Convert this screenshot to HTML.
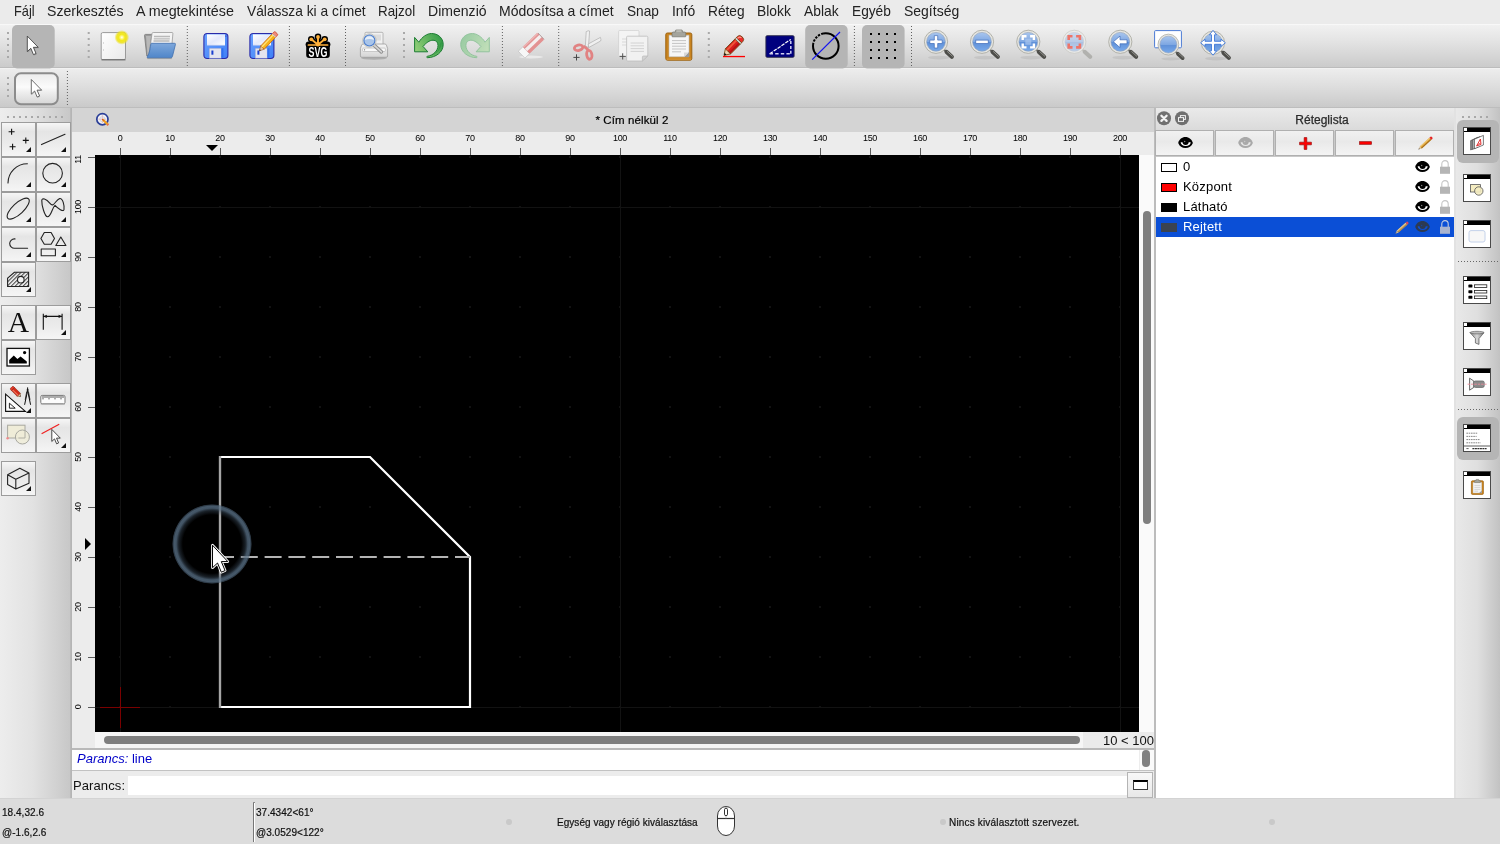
<!DOCTYPE html>
<html>
<head>
<meta charset="utf-8">
<title>LibreCAD</title>
<style>
*{box-sizing:border-box;margin:0;padding:0}
body{will-change:transform}
html,body{width:1500px;height:844px;overflow:hidden;background:#dcdcdc;font-family:"Liberation Sans",sans-serif;color:#1a1a1a}
.abs{position:absolute}
#menubar{position:absolute;left:0;top:0;width:1500px;height:24px;background:#ebebeb}
#menubar span{position:absolute;top:1.8px;font-size:15px;line-height:17px;color:#222;white-space:nowrap;transform-origin:0 50%}
#tb1{z-index:2;position:absolute;left:0;top:24px;width:1500px;height:44px;background:linear-gradient(#f1f1f1 0%,#e3e3e3 40%,#cbcbcb 100%);border-top:1px solid #f8f8f8;border-bottom:1px solid #bcbcbc}
#tb2{position:absolute;left:0;top:68px;width:1500px;height:39px;background:linear-gradient(#ededed 0%,#dedede 45%,#cacaca 100%);border-top:1px solid #f2f2f2}
#tbline{position:absolute;left:0;top:107px;width:1500px;height:1px;background:#bdbdbd}
.hdl{position:absolute;width:2px;background-image:linear-gradient(#a8a8a8 2px,transparent 2px);background-size:2px 6px}
.hdlh{position:absolute;height:2px;background-image:linear-gradient(90deg,#a8a8a8 2px,transparent 2px);background-size:6px 2px}
.sep{position:absolute;width:1px;background-image:linear-gradient(#555 1px,transparent 1px);background-size:1px 3px}
.seph{position:absolute;height:1px;background-image:linear-gradient(90deg,#666 1px,transparent 1px);background-size:3px 1px}
.selbtn{position:absolute;background:#b5b5b5;border-radius:5px}
.ico{position:absolute;overflow:visible}
#left{position:absolute;left:0;top:108px;width:72px;height:690px;background:linear-gradient(90deg,#ededed 0%,#e2e2e2 45%,#c6c6c6 100%)}
.tbtn{position:absolute;width:35px;height:35px;border:1px solid #9c9c9c;background:linear-gradient(#f6f6f6 0%,#e5e5e5 26%,#ebebeb 60%,#f5f5f5 100%)}
.tbtn.m::after{content:"";position:absolute;right:4px;bottom:4px;border-style:solid;border-width:0 0 5px 5px;border-color:transparent transparent #111 transparent}
.tbtn svg{position:absolute;left:0;top:0;width:33px;height:33px}
#mdi{position:absolute;left:72px;top:108px;width:1082px;height:640px;background:#ececec}
#mdititle{position:absolute;left:0;top:0;width:1082px;height:24px;background:#d4d4d4}
#canvas{position:absolute;left:95px;top:155px;width:1044px;height:577px;background:#000;overflow:hidden}
.rl{position:absolute;font-size:11px;line-height:11px;color:#000;white-space:nowrap;letter-spacing:-.3px}
#cmd{position:absolute;left:72px;top:748px;width:1082px;height:50px;background:#ececec}
#layers{position:absolute;left:1154px;top:108px;width:301px;height:690px;background:#fff}
.lbtn{position:absolute;top:22.2px;width:59px;height:25.8px;border:1px solid #b0b0b0;background:linear-gradient(#f1f1f1,#e9e9e9 45%,#f4f4f4)}
.lrow{position:absolute;left:2px;width:298px;height:20px;font-size:13px;line-height:20px;color:#000}
.lrow .sw{position:absolute;left:5px;top:6px;width:16px;height:9px;border:1px solid #000}
.lrow .nm{position:absolute;left:27px;top:0;letter-spacing:.2px}
#right{position:absolute;left:1455px;top:108px;width:45px;height:690px;background:linear-gradient(90deg,#e9e9e9 0%,#dfdfdf 50%,#c2c2c2 100%)}
.wico{position:absolute;left:8px;width:28px;height:28px;background:#fff;border:1px solid #4a4a4a}
.wico::before{content:"";position:absolute;left:0;top:0;width:26px;height:4px;background:#000}
.wico::after{content:"";position:absolute;left:0;top:0;width:3px;height:3px;background:#fff}
#status{position:absolute;left:0;top:798px;width:1500px;height:46px;background:#dcdcdc}
.st{position:absolute;font-size:10px;line-height:12px;color:#111;-webkit-text-stroke:.2px #111;white-space:nowrap;letter-spacing:.04px}
.dot{position:absolute;width:6px;height:6px;border-radius:3px;background:#c9c9c9}
</style>
</head>
<body>
<div id="menubar">
<span style="left:13.7px;transform:scaleX(0.852)">Fájl</span>
<span style="left:46.7px;transform:scaleX(0.938)">Szerkesztés</span>
<span style="left:136.1px;transform:scaleX(0.955)">A megtekintése</span>
<span style="left:246.7px;transform:scaleX(0.918)">Válassza ki a címet</span>
<span style="left:378.1px;transform:scaleX(0.892)">Rajzol</span>
<span style="left:428.1px;transform:scaleX(0.937)">Dimenzió</span>
<span style="left:499.4px;transform:scaleX(0.935)">Módosítsa a címet</span>
<span style="left:627.1px;transform:scaleX(0.910)">Snap</span>
<span style="left:672.1px;transform:scaleX(0.927)">Infó</span>
<span style="left:707.7px;transform:scaleX(0.914)">Réteg</span>
<span style="left:757.1px;transform:scaleX(0.924)">Blokk</span>
<span style="left:804.4px;transform:scaleX(0.922)">Ablak</span>
<span style="left:852.1px;transform:scaleX(0.914)">Egyéb</span>
<span style="left:904.1px;transform:scaleX(0.932)">Segítség</span>
</div>
<div id="tb1"><!--TB1-->
<svg class="abs" style="left:0;top:-1px" width="1500" height="84" viewBox="0 24 1500 84">
<defs>
<linearGradient id="gPaper" x1="0" y1="0" x2="1" y2="1"><stop offset="0" stop-color="#ffffff"/><stop offset="1" stop-color="#e9e9e9"/></linearGradient>
<radialGradient id="gGlow"><stop offset="0" stop-color="#ffffff"/><stop offset=".18" stop-color="#fff88a"/><stop offset=".42" stop-color="#f3e91c"/><stop offset=".7" stop-color="#efe31c" stop-opacity=".9"/><stop offset="1" stop-color="#e8dc20" stop-opacity="0"/></radialGradient>
<linearGradient id="gFold" x1="0" y1="0" x2="0" y2="1"><stop offset="0" stop-color="#7fa8dc"/><stop offset="1" stop-color="#4f86c9"/></linearGradient>
<linearGradient id="gDisk" x1="0" y1="0" x2="1" y2="1"><stop offset="0" stop-color="#6aa2ff"/><stop offset="1" stop-color="#3f7ff6"/></linearGradient>
<linearGradient id="gLabel" x1="0" y1="0" x2="1" y2="1"><stop offset="0" stop-color="#ffffff"/><stop offset=".5" stop-color="#e4e9fb"/><stop offset="1" stop-color="#ffffff"/></linearGradient>
<linearGradient id="gUndo" gradientUnits="userSpaceOnUse" x1="414" y1="52" x2="443" y2="36"><stop offset="0" stop-color="#9ad27c"/><stop offset="1" stop-color="#2f9a46"/></linearGradient>
<linearGradient id="gRedo" gradientUnits="userSpaceOnUse" x1="414" y1="52" x2="443" y2="36"><stop offset="0" stop-color="#c3e2b8"/><stop offset="1" stop-color="#8fc79a"/></linearGradient>
<linearGradient id="gLens" x1="0" y1="0" x2="0" y2="1"><stop offset="0" stop-color="#a9c6ee"/><stop offset=".5" stop-color="#7ea7e2"/><stop offset=".52" stop-color="#5f90d8"/><stop offset="1" stop-color="#79aaea"/></linearGradient>
<linearGradient id="gLensF" x1="0" y1="0" x2="0" y2="1"><stop offset="0" stop-color="#c5d6ee"/><stop offset=".5" stop-color="#afc6e8"/><stop offset=".52" stop-color="#9db8e2"/><stop offset="1" stop-color="#b3cdf0"/></linearGradient>
<linearGradient id="gBtn" x1="0" y1="0" x2="0" y2="1"><stop offset="0" stop-color="#ebebeb"/><stop offset=".45" stop-color="#fbfbfb"/><stop offset=".6" stop-color="#efefef"/><stop offset="1" stop-color="#d6d6d6"/></linearGradient>
<linearGradient id="gPrn" x1="0" y1="0" x2="0" y2="1"><stop offset="0" stop-color="#f6f6f6"/><stop offset="1" stop-color="#d4d4d4"/></linearGradient>
<g id="lens"><ellipse cx="3" cy="15.8" rx="11" ry="1.8" fill="#000" opacity=".07"/><path d="M7.8 7.8L11 10.6" stroke="#6a6a66" stroke-width="2"/><path d="M10.6 10.2L15.8 15" stroke="#4e4e4a" stroke-width="4.2" stroke-linecap="round"/><path d="M11.4 9.8L16.4 14.4" stroke="#9a9a94" stroke-width=".9" stroke-linecap="round"/><circle r="11.6" fill="#e6e6e1" stroke="#a4a49c" stroke-width=".8"/><circle r="9.4" fill="url(#gLens)" stroke="#8f9fb8" stroke-width=".6"/></g>
<g id="lensF" opacity=".8"><path d="M7.8 7.8L11 10.6" stroke="#b4b4b0" stroke-width="2"/><path d="M10.6 10.2L15.8 15" stroke="#a8a8a4" stroke-width="4.2" stroke-linecap="round"/><circle r="11.6" fill="#ececea" stroke="#c4c4be" stroke-width=".8"/><circle r="9.4" fill="url(#gLensF)" stroke="#b8c2d2" stroke-width=".6"/></g>
</defs>
<rect x="7" y="32" width="2" height="2" fill="#a9a9a9"/>
<rect x="7" y="38" width="2" height="2" fill="#a9a9a9"/>
<rect x="7" y="44" width="2" height="2" fill="#a9a9a9"/>
<rect x="7" y="50" width="2" height="2" fill="#a9a9a9"/>
<rect x="7" y="56" width="2" height="2" fill="#a9a9a9"/>
<rect x="12" y="25" width="42.7" height="43.5" rx="5" fill="#b5b5b5"/>
<g transform="translate(27.3 36.1) scale(0.95)"><path d="M0 0V16.3L3.7 12.8L6.5 19.5L9.2 18.3L6.4 11.8H11.5Z" transform="translate(.8 1)" fill="#000" opacity=".15"/><path d="M0 0V16.3L3.7 12.8L6.5 19.5L9.2 18.3L6.4 11.8H11.5Z" fill="#fff" stroke="#333" stroke-width="0.85" stroke-linejoin="miter"/></g>
<rect x="87.7" y="32" width="2" height="2" fill="#a9a9a9"/>
<rect x="87.7" y="38" width="2" height="2" fill="#a9a9a9"/>
<rect x="87.7" y="44" width="2" height="2" fill="#a9a9a9"/>
<rect x="87.7" y="50" width="2" height="2" fill="#a9a9a9"/>
<rect x="87.7" y="56" width="2" height="2" fill="#a9a9a9"/>
<rect x="101.2" y="32.6" width="24.3" height="27" rx="1.5" fill="url(#gPaper)" stroke="#9a9a9a" stroke-width="1"/><path d="M101.5 59.8H125.5" stroke="#6e6e6e" stroke-width="1.2"/><path d="M103 43h1M103 50h1" stroke="#bbb" stroke-width="1"/><circle cx="121.8" cy="37.4" r="7.4" fill="url(#gGlow)"/>
<path d="M144.5 35.4Q144.5 34.4 145.5 34.4H152L154 37H166V56H146.8Z" fill="#9a9a9a" stroke="#777" stroke-width=".8"/><path d="M146 36H151L148.6 55H147.6Z" fill="#c4c4c4" opacity=".7"/><path d="M149 55L152 33.5Q152.2 32.5 153.2 32.5H172Q173 32.5 172.9 33.6L171 55Z" fill="#f4f4f4" stroke="#9a9a9a" stroke-width=".8"/><path d="M154 36.5H170M153.8 38.8H169.8M153.5 41H169.5" stroke="#b9b9b9" stroke-width="1.3"/><path d="M151.6 43.3H174.4Q175.8 43.3 175.4 44.6L172.4 56.6Q172.1 57.8 170.8 57.8H148Q146.6 57.8 147.4 56.6C149.6 53 150.4 47 150.8 44.2Q151 43.3 151.6 43.3Z" fill="url(#gFold)" stroke="#3f6fae" stroke-width=".8"/><path d="M147 58.6H172" stroke="#000" stroke-opacity=".18" stroke-width="1"/>
<rect x="186.8" y="26" width="1" height="1" fill="#606060"/>
<rect x="186.8" y="29" width="1" height="1" fill="#606060"/>
<rect x="186.8" y="32" width="1" height="1" fill="#606060"/>
<rect x="186.8" y="35" width="1" height="1" fill="#606060"/>
<rect x="186.8" y="38" width="1" height="1" fill="#606060"/>
<rect x="186.8" y="41" width="1" height="1" fill="#606060"/>
<rect x="186.8" y="44" width="1" height="1" fill="#606060"/>
<rect x="186.8" y="47" width="1" height="1" fill="#606060"/>
<rect x="186.8" y="50" width="1" height="1" fill="#606060"/>
<rect x="186.8" y="53" width="1" height="1" fill="#606060"/>
<rect x="186.8" y="56" width="1" height="1" fill="#606060"/>
<rect x="186.8" y="59" width="1" height="1" fill="#606060"/>
<rect x="186.8" y="62" width="1" height="1" fill="#606060"/>
<rect x="186.8" y="65" width="1" height="1" fill="#606060"/>
<g transform="translate(203.4 33)"><rect x=".5" y=".5" width="24" height="25" rx="3.2" fill="url(#gDisk)" stroke="#2a2aa8" stroke-width="1.1"/><rect x="3.6" y="1.4" width="18" height="11" fill="url(#gLabel)"/><path d="M3.6 12.4H21.6" stroke="#9db8f0" stroke-width=".8"/><rect x="5.8" y="15.2" width="12" height="10" fill="#e4e4ee" stroke="#8c9bd0" stroke-width=".5"/><rect x="8" y="17.5" width="2" height="4.2" fill="#1a3fd0"/><rect x="18" y="15.2" width="2" height="9.5" fill="#2f6ff0"/><rect x="22" y="2.6" width="1" height="1" fill="#2a2aa8"/></g>
<g transform="translate(249.4 33)"><rect x=".5" y=".5" width="24" height="25" rx="3.2" fill="url(#gDisk)" stroke="#2a2aa8" stroke-width="1.1"/><rect x="3.6" y="1.4" width="18" height="11" fill="url(#gLabel)"/><path d="M3.6 12.4H21.6" stroke="#9db8f0" stroke-width=".8"/><rect x="5.8" y="15.2" width="12" height="10" fill="#e4e4ee" stroke="#8c9bd0" stroke-width=".5"/><rect x="8" y="17.5" width="2" height="4.2" fill="#1a3fd0"/><rect x="18" y="15.2" width="2" height="9.5" fill="#2f6ff0"/><rect x="22" y="2.6" width="1" height="1" fill="#2a2aa8"/></g>
<g transform="translate(259.3 50.9) rotate(-46.5)"><path d="M0 0L4.6 -2.4V2.4Z" fill="#e8c9a0" stroke="#8a3c10" stroke-width=".5"/><path d="M0 0L1.6 -.85V.85Z" fill="#222"/><path d="M4.6 -2.4H21.6V2.4H4.6Z" fill="#f6b21a" stroke="#c4620c" stroke-width=".7"/><path d="M4.6 -0.9H21.6" stroke="#ffe27a" stroke-width="1.3"/><path d="M21.6 -2.4H23.6Q24.8 -2.4 24.8 -1.2V1.2Q24.8 2.4 23.6 2.4H21.6Z" fill="#f08a7a" stroke="#c43a20" stroke-width=".7"/><path d="M21.2 -2.4V2.4" stroke="#d8d8d8" stroke-width="1"/></g>
<rect x="288.9" y="26" width="1" height="1" fill="#606060"/>
<rect x="288.9" y="29" width="1" height="1" fill="#606060"/>
<rect x="288.9" y="32" width="1" height="1" fill="#606060"/>
<rect x="288.9" y="35" width="1" height="1" fill="#606060"/>
<rect x="288.9" y="38" width="1" height="1" fill="#606060"/>
<rect x="288.9" y="41" width="1" height="1" fill="#606060"/>
<rect x="288.9" y="44" width="1" height="1" fill="#606060"/>
<rect x="288.9" y="47" width="1" height="1" fill="#606060"/>
<rect x="288.9" y="50" width="1" height="1" fill="#606060"/>
<rect x="288.9" y="53" width="1" height="1" fill="#606060"/>
<rect x="288.9" y="56" width="1" height="1" fill="#606060"/>
<rect x="288.9" y="59" width="1" height="1" fill="#606060"/>
<rect x="288.9" y="62" width="1" height="1" fill="#606060"/>
<rect x="288.9" y="65" width="1" height="1" fill="#606060"/>
<g transform="translate(318 34)"><rect x="-11.8" y="9.4" width="23.6" height="14.5" rx="3" fill="#000"/><g stroke="#000" stroke-width="4.8" stroke-linecap="round"><path d="M0 10.8V2.9M0 10.8L-6.7 5.3M0 10.8L6.7 5.3M-9.4 11H9.4"/></g><g fill="#000"><circle cx="0" cy="2.9" r="3.3"/><circle cx="-6.7" cy="5.3" r="3.3"/><circle cx="6.7" cy="5.3" r="3.3"/><circle cx="-9.4" cy="10.6" r="3"/><circle cx="9.4" cy="10.6" r="3"/></g><g stroke="#ffb13b" stroke-width="1.9" stroke-linecap="round"><path d="M0 10.8V2.9M0 10.8L-6.7 5.3M0 10.8L6.7 5.3"/><path d="M-9.6 11H9.6" stroke-width="1.7"/></g><g fill="#ffb13b"><circle cx="0" cy="2.9" r="1.9"/><circle cx="-6.7" cy="5.3" r="1.9"/><circle cx="6.7" cy="5.3" r="1.9"/><circle cx="0" cy="10.2" r="2.2"/></g><text x="0" y="22.7" text-anchor="middle" font-family="Liberation Sans,sans-serif" font-weight="bold" font-size="13.8" fill="#fff" textLength="18.8" lengthAdjust="spacingAndGlyphs">SVG</text></g>
<rect x="345" y="26" width="1" height="1" fill="#606060"/>
<rect x="345" y="29" width="1" height="1" fill="#606060"/>
<rect x="345" y="32" width="1" height="1" fill="#606060"/>
<rect x="345" y="35" width="1" height="1" fill="#606060"/>
<rect x="345" y="38" width="1" height="1" fill="#606060"/>
<rect x="345" y="41" width="1" height="1" fill="#606060"/>
<rect x="345" y="44" width="1" height="1" fill="#606060"/>
<rect x="345" y="47" width="1" height="1" fill="#606060"/>
<rect x="345" y="50" width="1" height="1" fill="#606060"/>
<rect x="345" y="53" width="1" height="1" fill="#606060"/>
<rect x="345" y="56" width="1" height="1" fill="#606060"/>
<rect x="345" y="59" width="1" height="1" fill="#606060"/>
<rect x="345" y="62" width="1" height="1" fill="#606060"/>
<rect x="345" y="65" width="1" height="1" fill="#606060"/>
<g transform="translate(360 31.5)"><ellipse cx="14" cy="26.6" rx="13" ry="1.6" fill="#000" opacity=".18"/><rect x="5" y=".8" width="18" height="14" rx="1" fill="#f1f1f1" stroke="#a8a8a8" stroke-width=".8"/><rect x="14" y="3" width="7" height="6" fill="#dcdcdc"/><path d="M3.2 12.5H24.8Q26 12.5 26.4 13.6L27.6 17V24.4Q27.6 25.8 26.2 25.8H1.8Q.4 25.8 .4 24.4V17L1.6 13.6Q2 12.5 3.2 12.5Z" fill="url(#gPrn)" stroke="#9c9c9c" stroke-width=".8"/><rect x="2.6" y="16.6" width="22.8" height="3.4" rx="1" fill="#fafafa" stroke="#b0b0b0" stroke-width=".6"/><circle cx="4.6" cy="18.3" r=".6" fill="#666"/><path d="M14.6 14.2L21.4 20.4" stroke="#8e8e8e" stroke-width="3.6" stroke-linecap="round"/><path d="M14.6 14.2L21.4 20.4" stroke="#d6d6d6" stroke-width="1.6" stroke-linecap="round"/><circle cx="9.4" cy="9" r="6.8" fill="#e9e9e6" stroke="#b4b4ae" stroke-width=".7"/><circle cx="9.4" cy="9" r="5.5" fill="#a9c5ea" stroke="#4a7ccc" stroke-width="1.1"/><path d="M4.8 8.4A4.7 4.7 0 0 1 14 8.4A7 3.4 0 0 0 4.8 8.4Z" fill="#fff" opacity=".7"/></g>
<rect x="403" y="32" width="2" height="2" fill="#a9a9a9"/>
<rect x="403" y="38" width="2" height="2" fill="#a9a9a9"/>
<rect x="403" y="44" width="2" height="2" fill="#a9a9a9"/>
<rect x="403" y="50" width="2" height="2" fill="#a9a9a9"/>
<rect x="403" y="56" width="2" height="2" fill="#a9a9a9"/>
<path d="M414.6 37.4L418.8 42.2C422 37 427 33.5 431.5 33.5C438 33.5 443.2 38 443.2 44.5C443.2 52 436 57.5 427.5 57.7C426.4 57.5 426.5 56.5 427.4 56.3C433 55.4 438 51 438 45.5C438 42 436 40.2 433 40.2C429.5 40.2 426 43 423 46.4L427.8 51.8H414.6Z" fill="url(#gUndo)" stroke="#1c7d33" stroke-width="1" stroke-linejoin="round"/>
<path d="M441.6 41C442.6 48 437 55 429 56.6C435 54.6 439.6 50 439.6 44.6Z" fill="#1f8a36" opacity=".45"/>
<g transform="translate(903.9 0) scale(-1 1)" opacity=".9"><path d="M414.6 37.4L418.8 42.2C422 37 427 33.5 431.5 33.5C438 33.5 443.2 38 443.2 44.5C443.2 52 436 57.5 427.5 57.7C426.4 57.5 426.5 56.5 427.4 56.3C433 55.4 438 51 438 45.5C438 42 436 40.2 433 40.2C429.5 40.2 426 43 423 46.4L427.8 51.8H414.6Z" fill="url(#gRedo)" stroke="#84bd92" stroke-width=".9" stroke-linejoin="round"/></g>
<rect x="501.9" y="26" width="1" height="1" fill="#606060"/>
<rect x="501.9" y="29" width="1" height="1" fill="#606060"/>
<rect x="501.9" y="32" width="1" height="1" fill="#606060"/>
<rect x="501.9" y="35" width="1" height="1" fill="#606060"/>
<rect x="501.9" y="38" width="1" height="1" fill="#606060"/>
<rect x="501.9" y="41" width="1" height="1" fill="#606060"/>
<rect x="501.9" y="44" width="1" height="1" fill="#606060"/>
<rect x="501.9" y="47" width="1" height="1" fill="#606060"/>
<rect x="501.9" y="50" width="1" height="1" fill="#606060"/>
<rect x="501.9" y="53" width="1" height="1" fill="#606060"/>
<rect x="501.9" y="56" width="1" height="1" fill="#606060"/>
<rect x="501.9" y="59" width="1" height="1" fill="#606060"/>
<rect x="501.9" y="62" width="1" height="1" fill="#606060"/>
<rect x="501.9" y="65" width="1" height="1" fill="#606060"/>
<g opacity=".9"><ellipse cx="531" cy="57" rx="12" ry="1.4" fill="#fff" opacity=".55"/><g transform="translate(521.6 54.7) rotate(-44)"><rect x="0" y="-4.8" width="6.4" height="9.6" fill="#fbfbfb" stroke="#b8b8b8" stroke-width=".6"/><rect x="6.4" y="-4.8" width="20.4" height="9.6" rx="1" fill="#e48a8a"/><rect x="6.4" y="-2" width="20.4" height="3.4" fill="#f6f0f0"/><path d="M6.4 -4.8H26.2Q26.8 -4.8 26.8 -4.2V-3.4H6.4Z" fill="#eeb0b0"/><path d="M26.8 -4.2V4.6" stroke="#9c8a8a" stroke-width=".8"/></g></g>
<rect x="558.2" y="26" width="1" height="1" fill="#606060"/>
<rect x="558.2" y="29" width="1" height="1" fill="#606060"/>
<rect x="558.2" y="32" width="1" height="1" fill="#606060"/>
<rect x="558.2" y="35" width="1" height="1" fill="#606060"/>
<rect x="558.2" y="38" width="1" height="1" fill="#606060"/>
<rect x="558.2" y="41" width="1" height="1" fill="#606060"/>
<rect x="558.2" y="44" width="1" height="1" fill="#606060"/>
<rect x="558.2" y="47" width="1" height="1" fill="#606060"/>
<rect x="558.2" y="50" width="1" height="1" fill="#606060"/>
<rect x="558.2" y="53" width="1" height="1" fill="#606060"/>
<rect x="558.2" y="56" width="1" height="1" fill="#606060"/>
<rect x="558.2" y="59" width="1" height="1" fill="#606060"/>
<rect x="558.2" y="62" width="1" height="1" fill="#606060"/>
<rect x="558.2" y="65" width="1" height="1" fill="#606060"/>
<g opacity=".92"><path d="M586.2 31.6Q588.6 30.2 589.6 31L588.4 47.6L585.4 45.8Z" fill="#f2f2f2" stroke="#a9a9a9" stroke-width=".7"/><path d="M600.4 37.4Q601.4 39.6 600.6 41L588.6 47.6L588.2 44Z" fill="#f2f2f2" stroke="#a9a9a9" stroke-width=".7"/><ellipse cx="578.6" cy="47.7" rx="4.3" ry="2.7" transform="rotate(-12 578.6 47.7)" fill="none" stroke="#e27c7c" stroke-width="2.8"/><ellipse cx="589.3" cy="54.8" rx="2.6" ry="4.5" transform="rotate(-10 589.3 54.8)" fill="none" stroke="#e27c7c" stroke-width="2.8"/><path d="M583.4 46L588 49.6" stroke="#e27c7c" stroke-width="2.8"/><path d="M573.4 57.4H579.6M576.5 54.3V60.5" stroke="#3c3c3c" stroke-width="1"/></g>
<g opacity=".95"><rect x="618.6" y="30.4" width="20.4" height="26" rx="1.2" fill="#f5f5f5" stroke="#cfcfcf" stroke-width=".8"/><path d="M622 39H628M622 42H628M622 45H628" stroke="#d9d9d9" stroke-width="1"/><path d="M627.6 36.2H646.8Q647.8 36.2 647.8 37.2V56L642.4 61H627.6Q626.6 61 626.6 60V37.2Q626.6 36.2 627.6 36.2Z" fill="#f3f3f3" stroke="#bdbdbd" stroke-width=".8"/><path d="M647.8 56L642.4 61V57Q642.4 56 643.4 56Z" fill="#d4d4d4" stroke="#b4b4b4" stroke-width=".6"/><path d="M630.6 43H644M630.6 45.8H644M630.6 48.6H644M630.6 51.4H644" stroke="#d2d2d2" stroke-width="1"/><path d="M619.6 56.4H625.8M622.7 53.3V59.5" stroke="#4a4a4a" stroke-width="1"/></g>
<g><rect x="665.8" y="33" width="26" height="27.2" rx="1.6" fill="#c9841f" stroke="#9c6110" stroke-width="1"/><path d="M666.6 59.2H691" stroke="#e2a24a" stroke-width=".8"/><path d="M669 35.2H689V56.8L685 56.8L669 56.8Z" fill="#f6f6f6" stroke="#b9b9b9" stroke-width=".6"/><path d="M689 52L684 57H689Z" fill="#9a9a9a"/><path d="M684 52.6H688.6L684 57Z" fill="#d8d8d8"/><path d="M672 40.6H686M672 43.4H686M672 46.2H686M672 49H686M672 51.8H681" stroke="#c4c4c4" stroke-width="1"/><path d="M672 33.4Q672 32 673.4 32H675.4V30.8Q675.4 30 676.2 30H681.6Q682.4 30 682.4 30.8V32H684.4Q685.8 32 685.8 33.4V36.2Q685.8 36.8 685.2 36.8H672.6Q672 36.8 672 36.2Z" fill="#a4a49c" stroke="#74746c" stroke-width=".7"/><path d="M676.4 31H681.4" stroke="#d2d2cc" stroke-width="1"/></g>
<rect x="707.8" y="32" width="2" height="2" fill="#a9a9a9"/>
<rect x="707.8" y="38" width="2" height="2" fill="#a9a9a9"/>
<rect x="707.8" y="44" width="2" height="2" fill="#a9a9a9"/>
<rect x="707.8" y="50" width="2" height="2" fill="#a9a9a9"/>
<rect x="707.8" y="56" width="2" height="2" fill="#a9a9a9"/>
<g transform="translate(724 55.4) rotate(-45.5)"><path d="M0 0L5.8 -3.7V3.7Z" fill="#f0d4b0" stroke="#6a4410" stroke-width=".8" stroke-linejoin="round"/><path d="M0 0L2.2 -1.4V1.4Z" fill="#111"/><path d="M5.8 -3.7H19.4V3.7H5.8Z" fill="#d81e1e" stroke="#6a4410" stroke-width=".8"/><path d="M5.8 -1.6H19.4" stroke="#ee5a3a" stroke-width="1.8"/><path d="M5.8 2.2H19.4" stroke="#b81414" stroke-width="1.6"/><path d="M19.4 -3.7H21.4V3.7H19.4Z" fill="#d4d4d4" stroke="#6a4410" stroke-width=".6"/><path d="M21.4 -3.7H23Q26 -3.7 26 0Q26 3.7 23 3.7H21.4Z" fill="#ee2a2a" stroke="#6a4410" stroke-width=".8"/><path d="M22 -2.2Q24.4 -2.2 24.6 -.4" stroke="#ff9a8a" stroke-width="1.2" fill="none" stroke-linecap="round"/></g>
<rect x="723" y="55.9" width="22" height="1.3" fill="#f00"/>
<rect x="765.9" y="35.7" width="28.2" height="21.6" rx="1.2" fill="#00007e" stroke="#2a2a4a" stroke-width=".9"/><path d="M769.8 53.7L790.8 39.4" stroke="#fff" stroke-width="1.2" stroke-dasharray="3.6 1.1"/><path d="M769.6 53.8H790.8" stroke="#cfcff2" stroke-width="1.5" stroke-dasharray="3.4 2.2"/><path d="M790.8 53.8V40" stroke="#cfcff2" stroke-width="1.5" stroke-dasharray="3 1.9"/>
<rect x="805.2" y="25" width="42.5" height="43.5" rx="5" fill="#b5b5b5"/>
<circle cx="825.8" cy="46" r="12.8" fill="none" stroke="#000" stroke-width="2"/><path d="M813.1 43.5A13 13 0 0 1 823.4 33.4" fill="none" stroke="#b5b5b5" stroke-width="3.4" stroke-dasharray="1.3 2.3" stroke-dashoffset="-.8"/><path d="M812.2 59.6L840 32" stroke="#1414f0" stroke-width="1.2"/>
<rect x="853.9" y="26" width="1" height="1" fill="#606060"/>
<rect x="853.9" y="29" width="1" height="1" fill="#606060"/>
<rect x="853.9" y="32" width="1" height="1" fill="#606060"/>
<rect x="853.9" y="35" width="1" height="1" fill="#606060"/>
<rect x="853.9" y="38" width="1" height="1" fill="#606060"/>
<rect x="853.9" y="41" width="1" height="1" fill="#606060"/>
<rect x="853.9" y="44" width="1" height="1" fill="#606060"/>
<rect x="853.9" y="47" width="1" height="1" fill="#606060"/>
<rect x="853.9" y="50" width="1" height="1" fill="#606060"/>
<rect x="853.9" y="53" width="1" height="1" fill="#606060"/>
<rect x="853.9" y="56" width="1" height="1" fill="#606060"/>
<rect x="853.9" y="59" width="1" height="1" fill="#606060"/>
<rect x="853.9" y="62" width="1" height="1" fill="#606060"/>
<rect x="853.9" y="65" width="1" height="1" fill="#606060"/>
<rect x="862" y="25" width="42.6" height="43.5" rx="5" fill="#b5b5b5"/>
<rect x="870" y="33" width="2" height="2" fill="#000"/>
<rect x="870" y="41" width="2" height="2" fill="#000"/>
<rect x="870" y="49" width="2" height="2" fill="#000"/>
<rect x="870" y="57" width="2" height="2" fill="#000"/>
<rect x="878" y="33" width="2" height="2" fill="#000"/>
<rect x="878" y="41" width="2" height="2" fill="#000"/>
<rect x="878" y="49" width="2" height="2" fill="#000"/>
<rect x="878" y="57" width="2" height="2" fill="#000"/>
<rect x="886" y="33" width="2" height="2" fill="#000"/>
<rect x="886" y="41" width="2" height="2" fill="#000"/>
<rect x="886" y="49" width="2" height="2" fill="#000"/>
<rect x="886" y="57" width="2" height="2" fill="#000"/>
<rect x="894" y="33" width="2" height="2" fill="#000"/>
<rect x="894" y="41" width="2" height="2" fill="#000"/>
<rect x="894" y="49" width="2" height="2" fill="#000"/>
<rect x="894" y="57" width="2" height="2" fill="#000"/>
<rect x="911" y="26" width="1" height="1" fill="#606060"/>
<rect x="911" y="29" width="1" height="1" fill="#606060"/>
<rect x="911" y="32" width="1" height="1" fill="#606060"/>
<rect x="911" y="35" width="1" height="1" fill="#606060"/>
<rect x="911" y="38" width="1" height="1" fill="#606060"/>
<rect x="911" y="41" width="1" height="1" fill="#606060"/>
<rect x="911" y="44" width="1" height="1" fill="#606060"/>
<rect x="911" y="47" width="1" height="1" fill="#606060"/>
<rect x="911" y="50" width="1" height="1" fill="#606060"/>
<rect x="911" y="53" width="1" height="1" fill="#606060"/>
<rect x="911" y="56" width="1" height="1" fill="#606060"/>
<rect x="911" y="59" width="1" height="1" fill="#606060"/>
<rect x="911" y="62" width="1" height="1" fill="#606060"/>
<rect x="911" y="65" width="1" height="1" fill="#606060"/>
<use href="#lens" x="936" y="41.8"/>
<path d="M934.3 35.6H937.7V40.1H942.2V43.5H937.7V48H934.3V43.5H929.8V40.1H934.3Z" fill="#fff" stroke="#3f6cb8" stroke-width=".7"/>
<use href="#lens" x="982" y="41.8"/>
<rect x="975.8" y="40.1" width="12.4" height="3.4" fill="#fff" stroke="#3f6cb8" stroke-width=".7"/>
<use href="#lens" x="1028.3" y="41.8"/>
<g transform="translate(1028.3 41.8)" fill="none" stroke="#fff" stroke-width="2.4"><path d="M-5.6 -1.8V-5.6H-1.8M1.8 -5.6H5.6V-1.8M5.6 1.8V5.6H1.8M-1.8 5.6H-5.6V1.8"/><rect x="-3" y="-3" width="6" height="6" fill="#a9c6ee" stroke="none" opacity=".7"/></g>
<use href="#lensF" x="1074.3" y="41.8"/>
<g transform="translate(1074.3 41.8)" fill="none" stroke="#ee7468" stroke-width="2.6"><path d="M-5.6 -1.8V-5.6H-1.8M1.8 -5.6H5.6V-1.8M5.6 1.8V5.6H1.8M-1.8 5.6H-5.6V1.8"/></g>
<use href="#lens" x="1120.3" y="41.8"/>
<path d="M1113.4 41.8L1120 36V39.8H1127V43.8H1120V47.6Z" fill="#fff" stroke="#3f6cb8" stroke-width=".7" stroke-linejoin="round"/>
<rect x="1154.6" y="30.6" width="26.8" height="17.2" rx="1" fill="#fff" stroke="#4a7ad4" stroke-width="1"/>
<g transform="translate(1168.4 44.6) scale(.9)"><use href="#lens"/></g>
<use href="#lens" x="1213" y="42.8"/>
<g transform="translate(1213 42.8)"><path d="M0 -12.4L3.6 -8H1.5V-1.5H8V-3.6L12.4 0L8 3.6V1.5H1.5V8H3.6L0 12.4L-3.6 8H-1.5V1.5H-8V3.6L-12.4 0L-8 -3.6V-1.5H-1.5V-8H-3.6Z" fill="#fff" stroke="#3f78d8" stroke-width=".9" stroke-linejoin="round"/></g>
<rect x="7" y="77" width="2" height="2" fill="#a9a9a9"/>
<rect x="7" y="83" width="2" height="2" fill="#a9a9a9"/>
<rect x="7" y="89" width="2" height="2" fill="#a9a9a9"/>
<rect x="7" y="95" width="2" height="2" fill="#a9a9a9"/>
<rect x="15" y="73.2" width="42.8" height="31" rx="6" fill="url(#gBtn)" stroke="#8c8c8c" stroke-width="2"/>
<g transform="translate(31.3 79.5) scale(0.9)"><path d="M0 0V16.3L3.7 12.8L6.5 19.5L9.2 18.3L6.4 11.8H11.5Z" transform="translate(.8 1)" fill="#000" opacity=".15"/><path d="M0 0V16.3L3.7 12.8L6.5 19.5L9.2 18.3L6.4 11.8H11.5Z" fill="#fff" stroke="#444" stroke-width="0.85" stroke-linejoin="miter"/></g>
<rect x="66.9" y="71" width="1" height="1" fill="#606060"/>
<rect x="66.9" y="74" width="1" height="1" fill="#606060"/>
<rect x="66.9" y="77" width="1" height="1" fill="#606060"/>
<rect x="66.9" y="80" width="1" height="1" fill="#606060"/>
<rect x="66.9" y="83" width="1" height="1" fill="#606060"/>
<rect x="66.9" y="86" width="1" height="1" fill="#606060"/>
<rect x="66.9" y="89" width="1" height="1" fill="#606060"/>
<rect x="66.9" y="92" width="1" height="1" fill="#606060"/>
<rect x="66.9" y="95" width="1" height="1" fill="#606060"/>
<rect x="66.9" y="98" width="1" height="1" fill="#606060"/>
<rect x="66.9" y="101" width="1" height="1" fill="#606060"/>
<rect x="66.9" y="104" width="1" height="1" fill="#606060"/>
</svg>
<!--/TB1--></div>
<div id="tb2"><!--TB2--></div>
<div id="tbline"></div>
<div id="left"><!--LEFT-->
<div class="hdlh" style="left:7px;top:8px;width:58px"></div>
<div class="abs" style="left:70px;top:0;width:2px;height:690px;background:linear-gradient(90deg,#bdbdbd,#b2b2b2)"></div>
<div class="tbtn m" style="left:1px;top:14px"><svg viewBox="0 0 33 33"><path d="M6.6 8.7H12.6M9.6 5.7V11.7M20.8 17.4H26.8M23.8 14.4V20.4M7.6 23.7H13.6M10.6 20.7V26.7" stroke="#111" stroke-width="1.1" fill="none"/></svg></div>
<div class="tbtn m" style="left:36px;top:14px"><svg viewBox="0 0 33 33"><path d="M4.5 21.6L28 11.2" stroke="#222" stroke-width="1.1" fill="none" stroke-linecap="round" stroke-linejoin="round"/></svg></div>
<div class="tbtn m" style="left:1px;top:49px"><svg viewBox="0 0 33 33"><path d="M6 25A19.4 19.4 0 0 1 25.4 5.7" stroke="#222" stroke-width="1.1" fill="none" stroke-linecap="round" stroke-linejoin="round"/></svg></div>
<div class="tbtn m" style="left:36px;top:49px"><svg viewBox="0 0 33 33"><circle cx="15.6" cy="15.2" r="9.8" stroke="#222" stroke-width="1.1" fill="none" stroke-linecap="round" stroke-linejoin="round"/></svg></div>
<div class="tbtn m" style="left:1px;top:84px"><svg viewBox="0 0 33 33"><ellipse cx="16.2" cy="15.6" rx="14.2" ry="5.5" transform="rotate(-43 16.2 15.6)" stroke="#222" stroke-width="1.1" fill="none" stroke-linecap="round" stroke-linejoin="round"/></svg></div>
<div class="tbtn m" style="left:36px;top:84px"><svg viewBox="0 0 33 33"><path d="M4.8 7.4C5 4.6 9 5.6 13 10.4C17 15.2 18.6 6.6 22.6 5.6C26 5 27.6 13.4 27 16.6C26.4 19.4 21 15.6 18 12.4C15 15 14 24 10.6 23.8C7.6 23.6 4.6 12 4.8 7.4Z" stroke="#222" stroke-width="1.1" fill="none" stroke-linecap="round" stroke-linejoin="round"/></svg></div>
<div class="tbtn m" style="left:1px;top:119px"><svg viewBox="0 0 33 33"><path d="M25.6 20.3H12.4A4.7 4.7 0 0 1 12.4 10.9H13" stroke="#222" stroke-width="1.1" fill="none" stroke-linecap="round" stroke-linejoin="round"/></svg></div>
<div class="tbtn m" style="left:36px;top:119px"><svg viewBox="0 0 33 33"><path d="M3.9 10.4L7.3 4.5H14.1L17.5 10.4L14.1 16.3H7.3ZM23.8 9L18.8 17.5H28.9ZM4.2 21H18.4V27.7H4.2Z" stroke="#222" stroke-width="1.1" fill="none" stroke-linecap="round" stroke-linejoin="round"/></svg></div>
<div class="tbtn m" style="left:1px;top:154px"><svg viewBox="0 0 33 33"><defs><pattern id="hp" width="2.8" height="2.8" patternUnits="userSpaceOnUse" patternTransform="rotate(-45)"><rect width="2.8" height="1" fill="#444"/></pattern></defs><path d="M5.6 15.2L12.4 9.3H26.6V23.5H5.6Z" fill="url(#hp)" stroke="#222" stroke-width="1.1"/><circle cx="18.8" cy="16.7" r="3.3" fill="#f2f2f2" stroke="#222" stroke-width="1.1"/></svg></div>
<div class="tbtn" style="left:1px;top:197px"><svg viewBox="0 0 33 33"><text x="16.3" y="25.6" text-anchor="middle" font-family="Liberation Serif,serif" font-size="29.5" fill="#111">A</text></svg></div>
<div class="tbtn m" style="left:36px;top:197px"><svg viewBox="0 0 33 33"><path d="M6.3 7.8V23.8M25.1 7.8V23.8M6.3 10.4H25.1" stroke="#111" stroke-width="1.1" fill="none"/><path d="M6.3 10.4L9.8 8.8V12ZM25.1 10.4L21.6 8.8V12Z" fill="#111"/></svg></div>
<div class="tbtn" style="left:1px;top:232px"><svg viewBox="0 0 33 33"><rect x="5" y="7.4" width="22.4" height="17.6" fill="#fff" stroke="#111" stroke-width="1.3"/><path d="M7.2 22.6V19L11.8 14.6L15.4 18L18.6 15.6L24.8 20.4V22.6Z" fill="#000"/><circle cx="22.6" cy="11.6" r="1.6" fill="#000"/></svg></div>
<div class="tbtn m" style="left:1px;top:275px"><svg viewBox="0 0 33 33"><path d="M3.6 10.2V27.4H23.4Z" fill="#fdfdfd" stroke="#111" stroke-width="1.1" stroke-linejoin="miter"/><path d="M7.4 19.2V24.2H13.2Z" fill="none" stroke="#111" stroke-width=".9"/><g transform="translate(18.6 12.6) rotate(-135)"><path d="M0 0L2.6 -2.2V2.2Z" fill="#e8c9a0" stroke="#6a3a10" stroke-width=".4"/><path d="M0 0L1 -.8V.8Z" fill="#222"/><rect x="2.6" y="-2.2" width="8.2" height="4.4" fill="#d42a1a" stroke="#7a1a08" stroke-width=".5"/><path d="M2.6 -.8H10.8" stroke="#f07a60" stroke-width="1"/><path d="M10.8 -2.2H11.8Q13 -2.2 13 -1V1Q13 2.2 11.8 2.2H10.8Z" fill="#e8392a" stroke="#7a1a08" stroke-width=".5"/></g><path d="M25.6 3.4V6.6M25.6 6.6L22.6 20.8M25.6 6.6L28.6 20.8" stroke="#111" stroke-width="1" fill="none"/><path d="M24.8 7.4L23.2 15.8M26.4 7.4L28 15.8" stroke="#111" stroke-width=".8" fill="none"/><circle cx="25.6" cy="6" r="1" fill="#111"/></svg></div>
<div class="tbtn" style="left:36px;top:275px"><svg viewBox="0 0 33 33"><rect x="3.8" y="11.4" width="24.2" height="8.4" rx="1.4" fill="#fcfcfc" stroke="#777" stroke-width="1"/><path d="M3.8 20.2H28" stroke="#aaa" stroke-width=".8"/><path d="M6 12V15.4M8 12V14M10 12V14M12 12V15.4M14 12V14M16 12V14M18 12V15.4M20 12V14M22 12V14M24 12V15.4M26 12V14" stroke="#333" stroke-width=".8"/></svg></div>
<div class="tbtn" style="left:1px;top:310px"><svg viewBox="0 0 33 33"><rect x="5.6" y="6.2" width="17.4" height="12.8" fill="#efecd8" stroke="#a8a8a0" stroke-width="1"/><circle cx="20.4" cy="18" r="7" fill="#efecd8" fill-opacity=".85" stroke="#a8a8a0" stroke-width="1"/><path d="M16.4 19H23V12" fill="none" stroke="#a8a8a0" stroke-width=".8"/><circle cx="5.6" cy="19.2" r="1.2" fill="#f08a8a"/></svg></div>
<div class="tbtn m" style="left:36px;top:310px"><svg viewBox="0 0 33 33"><path d="M4.6 14.8L22.2 5.2" stroke="#f02020" stroke-width="1.2"/><g transform="translate(14.8 10.4) scale(.74)"><path d="M0 0V16.3L3.7 12.8L6.5 19.5L9.2 18.3L6.4 11.8H11.5Z" fill="#fff" stroke="#333" stroke-width="1.2"/></g></svg></div>
<div class="tbtn m" style="left:1px;top:353px"><svg viewBox="0 0 33 33"><path d="M17.8 6.2L27 11V21.2L13.8 27L5.6 22.6V12.8ZM5.6 12.8L13.8 17.2L27 11M13.8 17.2V27" stroke="#222" stroke-width="1.1" fill="none" stroke-linecap="round" stroke-linejoin="round"/></svg></div>
<!--/LEFT--></div>
<div id="mdi"><div id="mdititle"></div><!--MDI-->
<div class="abs" style="left:48px;top:40px;width:1px;height:7px;background:#5a5a5a"></div>
<div class="rl" style="left:28px;top:24px;width:40px;text-align:center;font-size:9px;line-height:12px">0</div>
<div class="abs" style="left:98px;top:40px;width:1px;height:7px;background:#5a5a5a"></div>
<div class="rl" style="left:78px;top:24px;width:40px;text-align:center;font-size:9px;line-height:12px">10</div>
<div class="abs" style="left:148px;top:40px;width:1px;height:7px;background:#5a5a5a"></div>
<div class="rl" style="left:128px;top:24px;width:40px;text-align:center;font-size:9px;line-height:12px">20</div>
<div class="abs" style="left:198px;top:40px;width:1px;height:7px;background:#5a5a5a"></div>
<div class="rl" style="left:178px;top:24px;width:40px;text-align:center;font-size:9px;line-height:12px">30</div>
<div class="abs" style="left:248px;top:40px;width:1px;height:7px;background:#5a5a5a"></div>
<div class="rl" style="left:228px;top:24px;width:40px;text-align:center;font-size:9px;line-height:12px">40</div>
<div class="abs" style="left:298px;top:40px;width:1px;height:7px;background:#5a5a5a"></div>
<div class="rl" style="left:278px;top:24px;width:40px;text-align:center;font-size:9px;line-height:12px">50</div>
<div class="abs" style="left:348px;top:40px;width:1px;height:7px;background:#5a5a5a"></div>
<div class="rl" style="left:328px;top:24px;width:40px;text-align:center;font-size:9px;line-height:12px">60</div>
<div class="abs" style="left:398px;top:40px;width:1px;height:7px;background:#5a5a5a"></div>
<div class="rl" style="left:378px;top:24px;width:40px;text-align:center;font-size:9px;line-height:12px">70</div>
<div class="abs" style="left:448px;top:40px;width:1px;height:7px;background:#5a5a5a"></div>
<div class="rl" style="left:428px;top:24px;width:40px;text-align:center;font-size:9px;line-height:12px">80</div>
<div class="abs" style="left:498px;top:40px;width:1px;height:7px;background:#5a5a5a"></div>
<div class="rl" style="left:478px;top:24px;width:40px;text-align:center;font-size:9px;line-height:12px">90</div>
<div class="abs" style="left:548px;top:40px;width:1px;height:7px;background:#5a5a5a"></div>
<div class="rl" style="left:528px;top:24px;width:40px;text-align:center;font-size:9px;line-height:12px">100</div>
<div class="abs" style="left:598px;top:40px;width:1px;height:7px;background:#5a5a5a"></div>
<div class="rl" style="left:578px;top:24px;width:40px;text-align:center;font-size:9px;line-height:12px">110</div>
<div class="abs" style="left:648px;top:40px;width:1px;height:7px;background:#5a5a5a"></div>
<div class="rl" style="left:628px;top:24px;width:40px;text-align:center;font-size:9px;line-height:12px">120</div>
<div class="abs" style="left:698px;top:40px;width:1px;height:7px;background:#5a5a5a"></div>
<div class="rl" style="left:678px;top:24px;width:40px;text-align:center;font-size:9px;line-height:12px">130</div>
<div class="abs" style="left:748px;top:40px;width:1px;height:7px;background:#5a5a5a"></div>
<div class="rl" style="left:728px;top:24px;width:40px;text-align:center;font-size:9px;line-height:12px">140</div>
<div class="abs" style="left:798px;top:40px;width:1px;height:7px;background:#5a5a5a"></div>
<div class="rl" style="left:778px;top:24px;width:40px;text-align:center;font-size:9px;line-height:12px">150</div>
<div class="abs" style="left:848px;top:40px;width:1px;height:7px;background:#5a5a5a"></div>
<div class="rl" style="left:828px;top:24px;width:40px;text-align:center;font-size:9px;line-height:12px">160</div>
<div class="abs" style="left:898px;top:40px;width:1px;height:7px;background:#5a5a5a"></div>
<div class="rl" style="left:878px;top:24px;width:40px;text-align:center;font-size:9px;line-height:12px">170</div>
<div class="abs" style="left:948px;top:40px;width:1px;height:7px;background:#5a5a5a"></div>
<div class="rl" style="left:928px;top:24px;width:40px;text-align:center;font-size:9px;line-height:12px">180</div>
<div class="abs" style="left:998px;top:40px;width:1px;height:7px;background:#5a5a5a"></div>
<div class="rl" style="left:978px;top:24px;width:40px;text-align:center;font-size:9px;line-height:12px">190</div>
<div class="abs" style="left:1048px;top:40px;width:1px;height:7px;background:#5a5a5a"></div>
<div class="rl" style="left:1028px;top:24px;width:40px;text-align:center;font-size:9px;line-height:12px">200</div>
<div class="abs" style="left:16px;top:599px;width:7px;height:1px;background:#5a5a5a"></div>
<div class="rl" style="left:-14px;top:593px;width:40px;height:12px;text-align:center;font-size:9px;line-height:12px;transform:rotate(-90deg);transform-origin:center">0</div>
<div class="abs" style="left:16px;top:549px;width:7px;height:1px;background:#5a5a5a"></div>
<div class="rl" style="left:-14px;top:543px;width:40px;height:12px;text-align:center;font-size:9px;line-height:12px;transform:rotate(-90deg);transform-origin:center">10</div>
<div class="abs" style="left:16px;top:499px;width:7px;height:1px;background:#5a5a5a"></div>
<div class="rl" style="left:-14px;top:493px;width:40px;height:12px;text-align:center;font-size:9px;line-height:12px;transform:rotate(-90deg);transform-origin:center">20</div>
<div class="abs" style="left:16px;top:449px;width:7px;height:1px;background:#5a5a5a"></div>
<div class="rl" style="left:-14px;top:443px;width:40px;height:12px;text-align:center;font-size:9px;line-height:12px;transform:rotate(-90deg);transform-origin:center">30</div>
<div class="abs" style="left:16px;top:399px;width:7px;height:1px;background:#5a5a5a"></div>
<div class="rl" style="left:-14px;top:393px;width:40px;height:12px;text-align:center;font-size:9px;line-height:12px;transform:rotate(-90deg);transform-origin:center">40</div>
<div class="abs" style="left:16px;top:349px;width:7px;height:1px;background:#5a5a5a"></div>
<div class="rl" style="left:-14px;top:343px;width:40px;height:12px;text-align:center;font-size:9px;line-height:12px;transform:rotate(-90deg);transform-origin:center">50</div>
<div class="abs" style="left:16px;top:299px;width:7px;height:1px;background:#5a5a5a"></div>
<div class="rl" style="left:-14px;top:293px;width:40px;height:12px;text-align:center;font-size:9px;line-height:12px;transform:rotate(-90deg);transform-origin:center">60</div>
<div class="abs" style="left:16px;top:249px;width:7px;height:1px;background:#5a5a5a"></div>
<div class="rl" style="left:-14px;top:243px;width:40px;height:12px;text-align:center;font-size:9px;line-height:12px;transform:rotate(-90deg);transform-origin:center">70</div>
<div class="abs" style="left:16px;top:199px;width:7px;height:1px;background:#5a5a5a"></div>
<div class="rl" style="left:-14px;top:193px;width:40px;height:12px;text-align:center;font-size:9px;line-height:12px;transform:rotate(-90deg);transform-origin:center">80</div>
<div class="abs" style="left:16px;top:149px;width:7px;height:1px;background:#5a5a5a"></div>
<div class="rl" style="left:-14px;top:143px;width:40px;height:12px;text-align:center;font-size:9px;line-height:12px;transform:rotate(-90deg);transform-origin:center">90</div>
<div class="abs" style="left:16px;top:99px;width:7px;height:1px;background:#5a5a5a"></div>
<div class="rl" style="left:-14px;top:93px;width:40px;height:12px;text-align:center;font-size:9px;line-height:12px;transform:rotate(-90deg);transform-origin:center">100</div>
<div class="abs" style="left:16px;top:49px;width:7px;height:1px;background:#5a5a5a"></div>
<div class="abs" style="left:0;top:47px;width:14px;height:12px;overflow:hidden"><div class="rl" style="left:-14px;top:-4px;width:40px;height:12px;text-align:center;font-size:9px;line-height:12px;transform:rotate(-90deg);transform-origin:center">110</div></div>
<svg class="ico" style="left:134px;top:37px" width="12" height="6"><path d="M0 0H12L6 6Z" fill="#000"/></svg>
<svg class="ico" style="left:13px;top:430px" width="6" height="12"><path d="M0 0V12L6 6Z" fill="#000"/></svg>
<div class="abs" style="left:0;top:1.8px;width:1082px;text-align:center;font-size:11.5px;line-height:20px;color:#000;-webkit-text-stroke:.2px #000;letter-spacing:.1px;padding-left:38px">* Cím nélkül 2</div>
<svg class="ico" style="left:22.6px;top:3.6px" width="16" height="16" viewBox="0 0 16 16"><circle cx="7.4" cy="7.2" r="5.6" fill="#f1f1f5" stroke="#2b3f98" stroke-width="1.7"/><path d="M3.4 7.2H11.4M7.4 3.2V11.2" stroke="#e0a8b0" stroke-width=".7"/><circle cx="7.4" cy="7.2" r="2.6" fill="none" stroke="#c8ccd8" stroke-width=".7"/><path d="M8 7.8L12.6 12.4" stroke="#f0a020" stroke-width="2.2" stroke-linecap="round"/><path d="M7.4 7.2l1.4 1.4" stroke="#c03030" stroke-width="1"/><path d="M12.4 12.2l.8 .8" stroke="#e06060" stroke-width="2"/></svg>
<div class="abs" style="left:1067px;top:47px;width:15px;height:577px;background:#fafafa"></div>
<div class="abs" style="left:1071px;top:103px;width:8px;height:313px;border-radius:4px;background:#7f7f7f"></div>
<div class="abs" style="left:23px;top:624px;width:988px;height:16px;background:#f6f6f6"></div>
<div class="abs" style="left:0;top:624px;width:23px;height:16px;background:#ececec"></div>
<div class="abs" style="left:32px;top:628px;width:976px;height:8px;border-radius:4px;background:#7f7f7f"></div>
<div class="abs" style="left:1011px;top:624px;width:71px;height:16px;background:#ebebeb"></div>
<div class="abs" style="left:1011px;top:625px;width:71px;text-align:right;font-size:13px;line-height:15px;color:#111;white-space:nowrap">10 &lt; 100</div>
<!--/MDI--></div>
<div id="canvas"><!--CANVAS-->
<svg class="abs" style="left:0;top:0" width="1044" height="577" viewBox="95 155 1044 577">
<defs><radialGradient id="ring" cx="50%" cy="50%" r="50%"><stop offset="0" stop-color="#000" stop-opacity="0"/><stop offset=".73" stop-color="#3f5163" stop-opacity="0"/><stop offset=".83" stop-color="#3f5163" stop-opacity=".5"/><stop offset=".895" stop-color="#546b80" stop-opacity="1"/><stop offset=".945" stop-color="#5a7288" stop-opacity="1"/><stop offset=".98" stop-color="#4a6075" stop-opacity=".7"/><stop offset="1" stop-color="#4a6075" stop-opacity="0"/></radialGradient>
<pattern id="dots" x="119.5" y="156.5" width="50" height="50" patternUnits="userSpaceOnUse"><rect x="0" y="0" width="1" height="1" fill="#464646"/></pattern></defs>
<rect x="95" y="155" width="1044" height="577" fill="url(#dots)"/>
<rect x="120" y="155" width="1" height="577" fill="#121212"/>
<rect x="620" y="155" width="1" height="577" fill="#121212"/>
<rect x="1120" y="155" width="1" height="577" fill="#121212"/>
<rect x="95" y="207" width="1044" height="1" fill="#121212"/>
<rect x="95" y="707" width="1044" height="1" fill="#121212"/>
<rect x="100" y="707" width="40" height="1" fill="#7a0000"/><rect x="120" y="687" width="1" height="41" fill="#7a0000"/>
<path d="M220 707H470V557L370 457H220" fill="none" stroke="#fff" stroke-width="2.2" stroke-linejoin="miter"/>
<path d="M220 456V708" fill="none" stroke="#a6a6a6" stroke-width="2.2"/>
<path d="M217 557H470" fill="none" stroke="#b4b4b4" stroke-width="2" stroke-dasharray="17 6.8"/>
<rect x="216" y="555" width="4" height="4" fill="#000"/>
<path d="M220 456V708" fill="none" stroke="#a6a6a6" stroke-width="2.2"/>
<circle cx="212" cy="544" r="40" fill="url(#ring)" opacity=".78"/>
<g transform="translate(212.5 545.2) scale(.9)"><path d="M0 0V25L5.6 19.8L9.8 30L14 28.2L9.8 18.2H17Z" fill="#fff" stroke="#fff" stroke-width="3" stroke-linejoin="round"/><path d="M0 0V25L5.6 19.8L9.8 30L14 28.2L9.8 18.2H17Z" fill="#fff" stroke="#000" stroke-width="1.1" stroke-linejoin="miter"/></g>
</svg>
<!--/CANVAS--></div>
<div id="cmd"><!--CMD-->
<div class="abs" style="left:0;top:0;width:1082px;height:2px;background:#b9b9b9"></div>
<div class="abs" style="left:0;top:2px;width:1082px;height:21px;background:#fff"></div>
<div class="abs" style="left:0;top:22px;width:1082px;height:1px;background:#c2c2c2"></div>
<div class="abs" style="left:1067px;top:2px;width:15px;height:20px;background:#fafafa;border-left:1px solid #ededed"></div>
<div class="abs" style="left:1070px;top:2px;width:8px;height:17px;border-radius:4px;background:#808080"></div>
<div class="abs" style="left:5px;top:3px;font-size:13px;line-height:16px;color:#0000c8;white-space:nowrap"><i>Parancs:</i> line</div>
<div class="abs" style="left:56px;top:28px;width:999px;height:18.5px;background:#fff"></div>
<div class="abs" style="left:1px;top:29px;font-size:13px;line-height:17px;color:#111;white-space:nowrap;letter-spacing:.1px">Parancs:</div>
<div class="abs" style="left:1055px;top:24px;width:26px;height:26px;border:1px solid #b4b4b4;background:linear-gradient(#f8f8f8,#e8e8e8)"><div class="abs" style="left:5px;top:7px;width:15px;height:10px;border:1px solid #3a3a3a;border-top:2.6px solid #000;background:#fff"></div></div>
<!--/CMD--></div>
<div id="layers"><!--LAYERS-->
<div class="abs" style="left:0;top:0;width:2px;height:690px;background:#bcbcbc"></div>
<div class="abs" style="left:2px;top:0;width:299px;height:23px;background:linear-gradient(#eaeaea,#dadada)"></div>
<div class="abs" style="left:118px;top:4.5px;width:100px;text-align:center;font-size:12px;line-height:15px;color:#2a2a2a;-webkit-text-stroke:.25px #2a2a2a">Réteglista</div>
<svg class="ico" style="left:3px;top:3px" width="34" height="15" viewBox="0 0 34 15"><circle cx="7" cy="7.3" r="7" fill="#707070"/><path d="M4.4 4.7L9.6 9.9M9.6 4.7L4.4 9.9" stroke="#f2f2f2" stroke-width="2.3" stroke-linecap="round"/><circle cx="25" cy="7.3" r="7" fill="#707070"/><rect x="23.4" y="4.6" width="5" height="3.8" fill="none" stroke="#f2f2f2" stroke-width="1"/><rect x="21.5" y="6.6" width="5" height="3.8" fill="#707070" stroke="#f2f2f2" stroke-width="1"/></svg>
<div class="abs" style="left:2px;top:23px;width:299px;height:26px;background:#c9c9c9"></div>
<div class="lbtn" style="left:1.4px"></div>
<div class="lbtn" style="left:61.4px"></div>
<div class="lbtn" style="left:121.4px"></div>
<div class="lbtn" style="left:181.4px"></div>
<div class="lbtn" style="left:241.4px"></div>
<svg class="ico" style="left:23.5px;top:29px;opacity:1" width="15" height="11" viewBox="0 0 15 11"><path d="M0.2 5.9C1.2 2.4 4 0.1 7.4 0.1C11 0.1 13.8 2.6 14.9 6C13.6 9.2 10.8 11 7.4 11C4.2 11 1.4 9.2 0.2 5.9Z" fill="#000"/><path d="M2.7 5.3A5 3.8 0 0 0 12.7 5.3Z" fill="#fff"/><circle cx="7.6" cy="4.9" r="3.05" fill="#000"/><circle cx="6.7" cy="4.5" r=".65" fill="#fff" opacity=".55"/></svg>
<svg class="ico" style="left:83.5px;top:29px;opacity:1" width="15" height="11" viewBox="0 0 15 11"><path d="M0.2 5.9C1.2 2.4 4 0.1 7.4 0.1C11 0.1 13.8 2.6 14.9 6C13.6 9.2 10.8 11 7.4 11C4.2 11 1.4 9.2 0.2 5.9Z" fill="#a9a9a9"/><path d="M2.7 5.3A5 3.8 0 0 0 12.7 5.3Z" fill="#e8e8e8"/><circle cx="7.6" cy="4.9" r="3.05" fill="#a9a9a9"/><circle cx="6.7" cy="4.5" r=".65" fill="#e8e8e8" opacity=".55"/></svg>
<svg class="ico" style="left:144.5px;top:28.5px" width="13" height="13" viewBox="0 0 13 13"><path d="M5.2 0.6H7.8V5.2H12.4V7.8H7.8V12.4H5.2V7.8H0.6V5.2H5.2Z" fill="#f00" stroke="#9a1010" stroke-width=".7"/></svg>
<svg class="ico" style="left:204.5px;top:33px" width="13" height="4" viewBox="0 0 13 4"><rect x=".6" y=".7" width="11.8" height="2.6" fill="#f00" stroke="#9a1010" stroke-width=".7"/></svg>
<svg class="ico" style="left:263.5px;top:27.5px" width="15" height="14" viewBox="0 0 15 14"><path d="M0.4 13.6L1.8 10.4L3.8 12.4Z" fill="#d8c098"/><path d="M0.4 13.6L1 12.2L1.8 13Z" fill="#444"/><path d="M1.8 10.4L11.4 1.8L13.4 3.8L3.8 12.4Z" fill="#dba23c"/><path d="M1.8 10.4L11.4 1.8L12.1 2.5L2.5 11.1Z" fill="#f2cc78"/><path d="M3.1 11.7L12.7 3.1L13.4 3.8L3.8 12.4Z" fill="#a8701c"/><path d="M11.4 1.8L12.5 0.8Q13.2 0.3 13.9 1L14.4 1.6Q14.8 2.3 14.3 2.9L13.4 3.8Z" fill="#e62222"/></svg>
<div class="lrow" style="top:49px"><div class="sw" style="background:#fff"></div><div class="nm">0</div></div>
<svg class="ico" style="left:261px;top:52.7px;opacity:1" width="15" height="11" viewBox="0 0 15 11"><path d="M0.2 5.9C1.2 2.4 4 0.1 7.4 0.1C11 0.1 13.8 2.6 14.9 6C13.6 9.2 10.8 11 7.4 11C4.2 11 1.4 9.2 0.2 5.9Z" fill="#000"/><path d="M2.7 5.3A5 3.8 0 0 0 12.7 5.3Z" fill="#fff"/><circle cx="7.6" cy="4.9" r="3.05" fill="#000"/><circle cx="6.7" cy="4.5" r=".65" fill="#fff" opacity=".55"/></svg>
<svg class="ico" style="left:286.3px;top:52.2px" width="10" height="14" viewBox="0 0 10 14"><path d="M1.8 7V4A3.2 3.4 0 0 1 8.2 4V7" fill="none" stroke="#c6c6c6" stroke-width="1.1"/><rect x="0" y="6.7" width="10" height="7.1" fill="#b5b5b5"/></svg>
<div class="lrow" style="top:69px"><div class="sw" style="background:#f00"></div><div class="nm">Központ</div></div>
<svg class="ico" style="left:261px;top:72.7px;opacity:1" width="15" height="11" viewBox="0 0 15 11"><path d="M0.2 5.9C1.2 2.4 4 0.1 7.4 0.1C11 0.1 13.8 2.6 14.9 6C13.6 9.2 10.8 11 7.4 11C4.2 11 1.4 9.2 0.2 5.9Z" fill="#000"/><path d="M2.7 5.3A5 3.8 0 0 0 12.7 5.3Z" fill="#fff"/><circle cx="7.6" cy="4.9" r="3.05" fill="#000"/><circle cx="6.7" cy="4.5" r=".65" fill="#fff" opacity=".55"/></svg>
<svg class="ico" style="left:286.3px;top:72.2px" width="10" height="14" viewBox="0 0 10 14"><path d="M1.8 7V4A3.2 3.4 0 0 1 8.2 4V7" fill="none" stroke="#c6c6c6" stroke-width="1.1"/><rect x="0" y="6.7" width="10" height="7.1" fill="#b5b5b5"/></svg>
<div class="lrow" style="top:89px"><div class="sw" style="background:#000"></div><div class="nm">Látható</div></div>
<svg class="ico" style="left:261px;top:92.7px;opacity:1" width="15" height="11" viewBox="0 0 15 11"><path d="M0.2 5.9C1.2 2.4 4 0.1 7.4 0.1C11 0.1 13.8 2.6 14.9 6C13.6 9.2 10.8 11 7.4 11C4.2 11 1.4 9.2 0.2 5.9Z" fill="#000"/><path d="M2.7 5.3A5 3.8 0 0 0 12.7 5.3Z" fill="#fff"/><circle cx="7.6" cy="4.9" r="3.05" fill="#000"/><circle cx="6.7" cy="4.5" r=".65" fill="#fff" opacity=".55"/></svg>
<svg class="ico" style="left:286.3px;top:92.2px" width="10" height="14" viewBox="0 0 10 14"><path d="M1.8 7V4A3.2 3.4 0 0 1 8.2 4V7" fill="none" stroke="#c6c6c6" stroke-width="1.1"/><rect x="0" y="6.7" width="10" height="7.1" fill="#b5b5b5"/></svg>
<div class="lrow" style="top:109px;background:#0b4fd6;color:#fff"><div class="sw" style="background:#3b4350;border-color:#3b4350"></div><div class="nm">Rejtett</div></div>
<svg class="ico" style="left:240.5px;top:112.5px" width="14" height="13" viewBox="0 0 15 14"><path d="M0.4 13.6L1.8 10.4L3.8 12.4Z" fill="#d8c098"/><path d="M0.4 13.6L1 12.2L1.8 13Z" fill="#444"/><path d="M1.8 10.4L11.4 1.8L13.4 3.8L3.8 12.4Z" fill="#cfa766"/><path d="M1.8 10.4L11.4 1.8L12.1 2.5L2.5 11.1Z" fill="#e6cc96"/><path d="M3.1 11.7L12.7 3.1L13.4 3.8L3.8 12.4Z" fill="#a98548"/><path d="M11.4 1.8L12.5 0.8Q13.2 0.3 13.9 1L14.4 1.6Q14.8 2.3 14.3 2.9L13.4 3.8Z" fill="#e2455a"/></svg>
<svg class="ico" style="left:261px;top:112.7px;opacity:1" width="15" height="11" viewBox="0 0 15 11"><path d="M0.2 5.9C1.2 2.4 4 0.1 7.4 0.1C11 0.1 13.8 2.6 14.9 6C13.6 9.2 10.8 11 7.4 11C4.2 11 1.4 9.2 0.2 5.9Z" fill="#2c3a52"/><path d="M2.7 5.3A5 3.8 0 0 0 12.7 5.3Z" fill="#0b4fd6"/><circle cx="7.6" cy="4.9" r="3.05" fill="#2c3a52"/><circle cx="6.7" cy="4.5" r=".65" fill="#0b4fd6" opacity=".55"/></svg>
<svg class="ico" style="left:286.3px;top:112.2px" width="10" height="14" viewBox="0 0 10 14"><path d="M1.8 7V4A3.2 3.4 0 0 1 8.2 4V7" fill="none" stroke="#c4ccdf" stroke-width="1.1"/><rect x="0" y="6.7" width="10" height="7.1" fill="#a9b4cf"/></svg>
<!--/LAYERS--></div>
<div id="right"><!--RIGHT-->
<div class="abs" style="left:-1px;top:0;width:2px;height:690px;background:#e2e2e2"></div>
<div class="hdlh" style="left:7px;top:8px;width:28px"></div>
<div class="selbtn" style="left:1.5px;top:12px;width:42.3px;height:42.6px;border-radius:6px"></div>
<div class="wico" style="top:19px"><svg class="abs" style="left:0;top:0" width="26" height="26" viewBox="0 0 26 26"><path d="M6.6 12.6L14 9.2V18.6L6.6 22Z" fill="#8a8a8a" stroke="#444" stroke-width=".6"/><path d="M8.4 12L15.8 8.6V18L8.4 21.4Z" fill="#b4b4b4" stroke="#444" stroke-width=".6"/><path d="M10.4 11.2L19.4 7.4V17L10.4 20.8Z" fill="#fdfdfd" stroke="#444" stroke-width=".7"/><path d="M12.6 18L16.4 11L17 16.4Z" fill="none" stroke="#e02020" stroke-width=".9"/><path d="M13.4 16.8L16.6 15" stroke="#e02020" stroke-width=".7"/></svg></div>
<div class="wico" style="top:66px"><svg class="abs" style="left:0;top:0" width="26" height="26" viewBox="0 0 26 26"><rect x="6.4" y="9.6" width="10" height="7.4" fill="#f4ecc0" stroke="#555" stroke-width=".8"/><circle cx="14.8" cy="16" r="4.2" fill="#f4ecc0" fill-opacity=".9" stroke="#555" stroke-width=".8"/></svg></div>
<div class="wico" style="top:112px"><svg class="abs" style="left:0;top:0" width="26" height="26" viewBox="0 0 26 26"><rect x="5" y="9.6" width="16" height="11.4" rx="2" fill="#f7f7f7" stroke="#c4d2ea" stroke-width="1"/></svg></div>
<div class="seph" style="left:3px;top:153px;width:42px"></div>
<div class="wico" style="top:168px"><svg class="abs" style="left:0;top:0" width="26" height="26" viewBox="0 0 26 26"><g fill="#000"><rect x="4.4" y="7.6" width="4" height="3" rx=".6"/><rect x="4.4" y="13.2" width="4" height="3" rx=".6"/><rect x="4.4" y="18.8" width="4" height="3" rx=".6"/></g><g fill="#fff" stroke="#222" stroke-width=".8"><rect x="10.4" y="7.8" width="12.4" height="2.6"/><rect x="10.4" y="13.4" width="12.4" height="2.6"/><rect x="10.4" y="19" width="12.4" height="2.6"/></g></svg></div>
<div class="wico" style="top:214px"><svg class="abs" style="left:0;top:0" width="26" height="26" viewBox="0 0 26 26"><defs><linearGradient id="gFun" x1="0" y1="0" x2="1" y2="0"><stop offset="0" stop-color="#8a8a8a"/><stop offset=".5" stop-color="#d8d8d8"/><stop offset="1" stop-color="#7a7a7a"/></linearGradient></defs><path d="M6 9.6H20L15 15.6V21.4L11.4 20V15.6Z" fill="url(#gFun)" stroke="#555" stroke-width=".7"/><ellipse cx="13" cy="9.6" rx="7" ry="1.3" fill="#bdbdbd" stroke="#555" stroke-width=".6"/></svg></div>
<div class="wico" style="top:260px"><svg class="abs" style="left:0;top:0" width="26" height="26" viewBox="0 0 26 26"><path d="M5.6 9.2L9.8 12V18.4L5.6 21.2Z" fill="#f4f4f4" stroke="#444" stroke-width=".8"/><rect x="9.8" y="12" width="10.4" height="6.4" rx="1.6" fill="#9a9a9a" stroke="#555" stroke-width=".7"/><path d="M12 12.4V18M14 12.4V18M16 12.4V18M18 12.4V18" stroke="#777" stroke-width=".8"/><path d="M3.6 15.2H22.6" stroke="#f08a9a" stroke-width=".9" stroke-dasharray="2.4 1"/></svg></div>
<div class="seph" style="left:3px;top:301px;width:42px"></div>
<div class="selbtn" style="left:1.5px;top:309px;width:42.3px;height:42.6px;border-radius:6px"></div>
<div class="wico" style="top:316px"><svg class="abs" style="left:0;top:0" width="26" height="26" viewBox="0 0 26 26"><g stroke="#777" stroke-width=".9" stroke-dasharray="1.6 .7"><path d="M2.4 8.2H13.4M2.4 11.4H12.6M2.4 14.6H15.6M2.4 17.8H16.6"/></g><path d="M0 21H26" stroke="#333" stroke-width=".8"/><path d="M2.4 23.6H4.6" stroke="#333" stroke-width=".8"/><path d="M8.4 23.6H22.6" stroke="#333" stroke-width="1.3" stroke-dasharray="2 .5"/></svg></div>
<div class="wico" style="top:363px"><svg class="abs" style="left:0;top:0" width="26" height="26" viewBox="0 0 26 26"><rect x="7.4" y="8.8" width="12" height="13.6" rx="1" fill="#c9841f" stroke="#9c6110" stroke-width=".7"/><rect x="9" y="10.4" width="8.8" height="10.6" fill="#f4f4f4" stroke="#bbb" stroke-width=".4"/><path d="M10.4 13.4H16.4M10.4 15.4H16.4M10.4 17.4H16.4M10.4 19.2H14" stroke="#c8c8c8" stroke-width=".7"/><path d="M17.8 18.4L15.2 21H17.8Z" fill="#999"/><path d="M10.6 8.4H12.2V7.4H14.6V8.4H16.2V10.6H10.6Z" fill="#a4a49c" stroke="#74746c" stroke-width=".5"/></svg></div>
<!--/RIGHT--></div>
<div id="status"><!--STATUS-->
<div class="st" style="left:2px;top:9px">18.4,32.6</div>
<div class="st" style="left:2px;top:29px">@-1.6,2.6</div>
<div class="abs" style="left:253px;top:4px;width:2.2px;height:40px;background:#fff"></div><div class="abs" style="left:253px;top:4px;width:.9px;height:40px;background:#767676"></div><div class="abs" style="left:253px;top:4px;width:2.2px;height:.8px;background:#8a8a8a"></div><div class="abs" style="left:0;top:0;width:1500px;height:1px;background:#d3d3d3"></div>
<div class="st" style="left:256px;top:9px">37.4342&lt;61°</div>
<div class="st" style="left:256px;top:29px">@3.0529&lt;122°</div>
<div class="dot" style="left:506px;top:21px"></div>
<div class="st" style="left:557px;top:19px">Egység vagy régió kiválasztása</div>
<svg class="ico" style="left:716px;top:7px" width="20" height="32" viewBox="0 0 20 32"><rect x="1.5" y="1.5" width="17" height="29" rx="8.5" ry="9.5" fill="#fff" stroke="#333" stroke-width="1"/><path d="M1.5 13.5H18.5" stroke="#333" stroke-width="1.2"/><path d="M10 1.5V13.5" stroke="#999" stroke-width=".6"/><rect x="8.5" y="3.2" width="3" height="7.5" rx="1.5" fill="#fff" stroke="#333" stroke-width="1"/></svg>
<div class="dot" style="left:940px;top:21px"></div>
<div class="st" style="left:949px;top:19px;letter-spacing:.17px">Nincs kiválasztott szervezet.</div>
<div class="dot" style="left:1269px;top:21px"></div>
<!--/STATUS--></div>
</body>
</html>
